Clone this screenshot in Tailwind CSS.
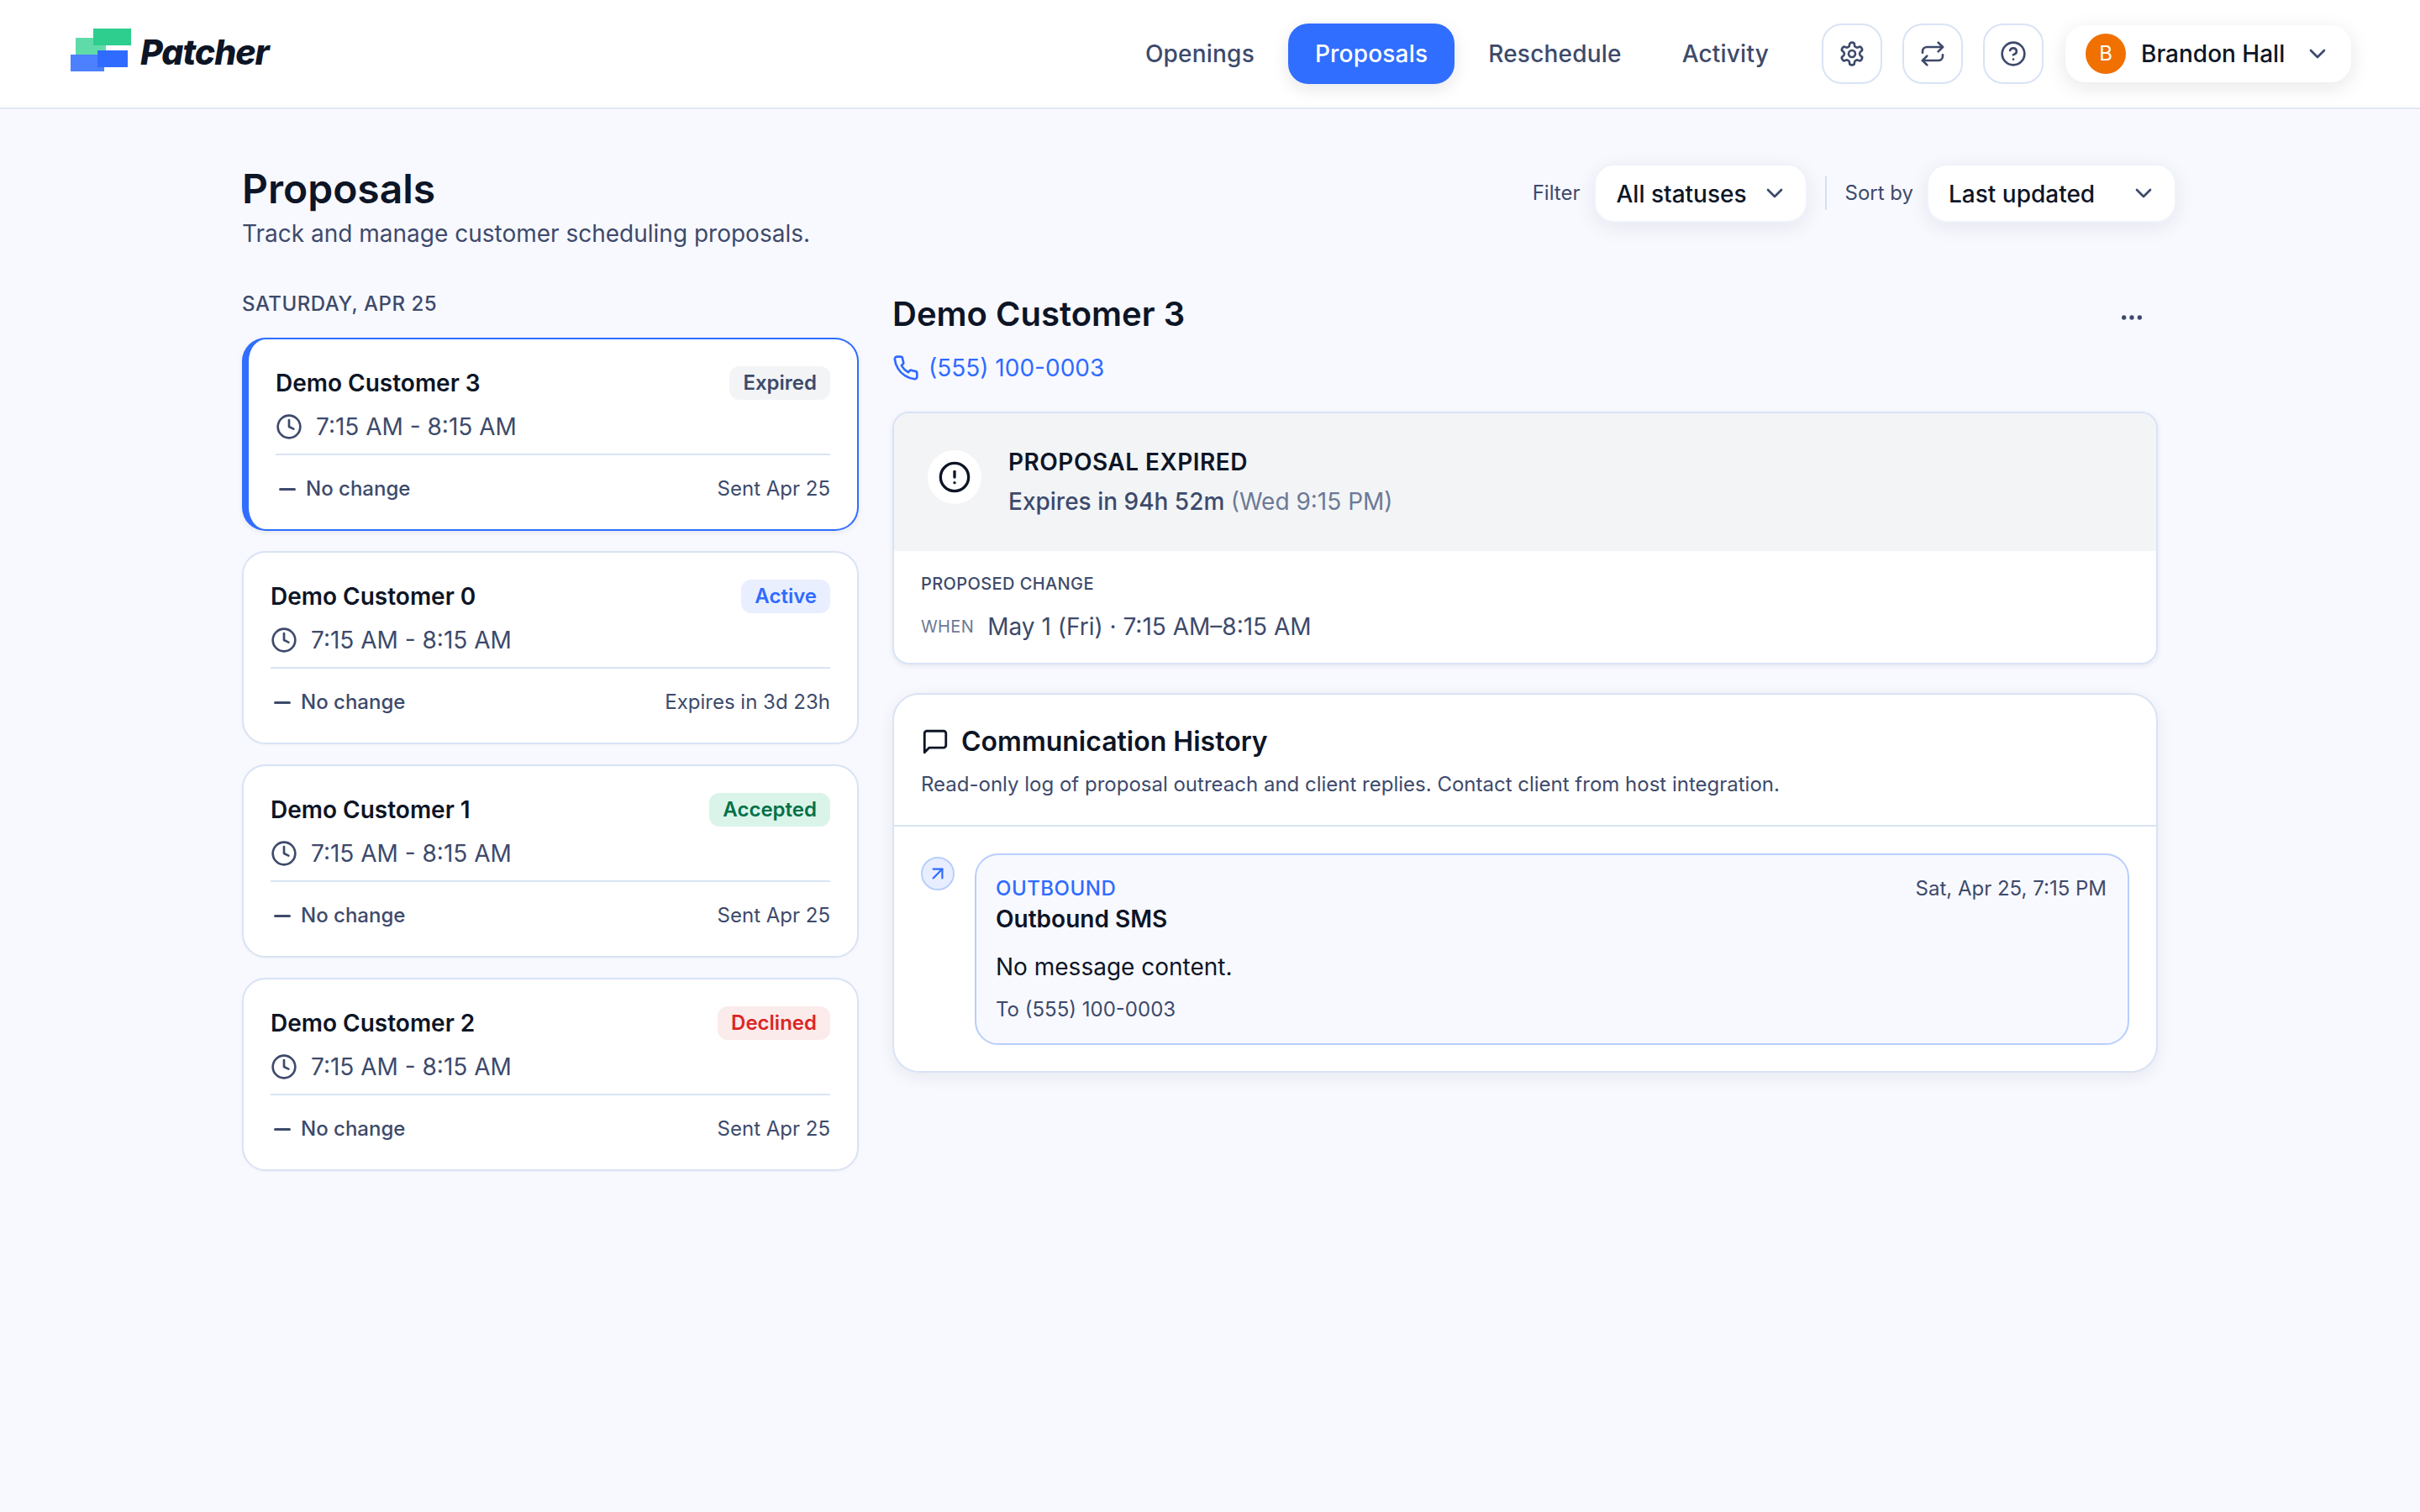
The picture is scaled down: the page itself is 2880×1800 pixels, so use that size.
<!DOCTYPE html>
<html>
<head>
<meta charset="utf-8">
<title>Patcher - Proposals</title>
<script src="https://cdn.jsdelivr.net/npm/@tailwindcss/browser@4"></script>
</head>
<body class="bg-[#f8f9ff] font-['Inter',sans-serif] text-[#0d1526] min-h-[1800px] antialiased">

<!-- top bar -->
<header class="h-[130px] bg-white border-b-2 border-[#e0e7f6] pl-[84px] pr-[82px] flex items-center justify-between">
  <div class="flex items-center gap-[11px]">
    <svg class="w-[72px] h-[51px] mb-[9px]" viewBox="0 0 72 51">
      <rect x="6" y="11" width="36" height="20" fill="#5fdbaa"/>
      <rect x="27" y="0" width="45" height="20" fill="#2dce8e"/>
      <rect x="0" y="31" width="40" height="20" fill="#4d80ff"/>
      <rect x="32" y="26" width="36" height="20" fill="#2f6bff"/>
    </svg>
    <span class="text-[41px] font-extrabold italic tracking-[-1px] leading-[50px] mb-[4px]">Patcher</span>
  </div>
  <div class="flex items-center">
    <nav class="flex items-center gap-[8px] text-[28px] font-medium tracking-[0.2px] text-[#3d4a6b]">
      <a class="h-[72px] px-[32px] flex items-center rounded-[24px]">Openings</a>
      <a class="h-[72px] px-[32px] flex items-center rounded-[24px] bg-[#306eff] text-white shadow-[0_6px_20px_rgba(15,23,42,0.10)]">Proposals</a>
      <a class="h-[72px] px-[32px] flex items-center rounded-[24px]">Reschedule</a>
      <a class="h-[72px] px-[32px] flex items-center rounded-[24px]">Activity</a>
    </nav>
    <div class="flex items-center gap-[24px] ml-[31px] text-[#3d4a6b]">
      <button class="w-[72px] h-[72px] rounded-[24px] border-2 border-[#d9e3f5] flex items-center justify-center">
        <svg class="w-[32px] h-[32px]" viewBox="0 0 24 24" fill="none" stroke="currentColor" stroke-width="2" stroke-linecap="round" stroke-linejoin="round"><path d="M12.22 2h-.44a2 2 0 0 0-2 2v.18a2 2 0 0 1-1 1.73l-.43.25a2 2 0 0 1-2 0l-.15-.08a2 2 0 0 0-2.73.73l-.22.38a2 2 0 0 0 .73 2.73l.15.1a2 2 0 0 1 1 1.72v.51a2 2 0 0 1-1 1.74l-.15.09a2 2 0 0 0-.73 2.73l.22.38a2 2 0 0 0 2.73.73l.15-.08a2 2 0 0 1 2 0l.43.25a2 2 0 0 1 1 1.73V20a2 2 0 0 0 2 2h.44a2 2 0 0 0 2-2v-.18a2 2 0 0 1 1-1.73l.43-.25a2 2 0 0 1 2 0l.15.08a2 2 0 0 0 2.73-.73l.22-.39a2 2 0 0 0-.73-2.73l-.15-.08a2 2 0 0 1-1-1.74v-.5a2 2 0 0 1 1-1.74l.15-.09a2 2 0 0 0 .73-2.73l-.22-.38a2 2 0 0 0-2.73-.73l-.15.08a2 2 0 0 1-2 0l-.43-.25a2 2 0 0 1-1-1.73V4a2 2 0 0 0-2-2z"/><circle cx="12" cy="12" r="3"/></svg>
      </button>
      <button class="w-[72px] h-[72px] rounded-[24px] border-2 border-[#d9e3f5] flex items-center justify-center">
        <svg class="w-[32px] h-[32px]" viewBox="0 0 24 24" fill="none" stroke="currentColor" stroke-width="2" stroke-linecap="round" stroke-linejoin="round"><path d="m17 2 4 4-4 4"/><path d="M3 11v-1a4 4 0 0 1 4-4h14"/><path d="m7 22-4-4 4-4"/><path d="M21 13v1a4 4 0 0 1-4 4H3"/></svg>
      </button>
      <button class="w-[72px] h-[72px] rounded-[24px] border-2 border-[#d9e3f5] flex items-center justify-center">
        <svg class="w-[32px] h-[32px]" viewBox="0 0 24 24" fill="none" stroke="currentColor" stroke-width="2" stroke-linecap="round" stroke-linejoin="round"><circle cx="12" cy="12" r="10"/><path d="M9.09 9a3 3 0 0 1 5.83 1c0 2-3 3-3 3"/><path d="M12 17h.01"/></svg>
      </button>
    </div>
    <div class="ml-[26px] w-[340px] h-[68px] rounded-[24px] bg-white shadow-[0_6px_24px_rgba(15,23,42,0.10)] pl-[24px] pr-[24px] flex items-center">
      <span class="w-[48px] h-[48px] rounded-full bg-[#f07000] text-white text-[24px] flex items-center justify-center">B</span>
      <span class="ml-[18px] flex-1 text-[28px] font-medium">Brandon Hall</span>
      <svg class="w-[32px] h-[32px] text-[#3d4a6b]" viewBox="0 0 24 24" fill="none" stroke="currentColor" stroke-width="2" stroke-linecap="round" stroke-linejoin="round"><path d="m6 9 6 6 6-6"/></svg>
    </div>
  </div>
</header>

<main class="w-[2304px] mx-auto pt-[64px]">
  <div class="flex items-start justify-between h-[152px]">
    <div>
      <h1 class="mt-[1px] text-[48px] leading-[60px] font-semibold">Proposals</h1>
      <p class="mt-[1px] text-[28px] leading-[44px] text-[#3d4a6b]">Track and manage customer scheduling proposals.</p>
    </div>
    <div class="flex items-center mt-[1px] mr-[2px]">
      <span class="text-[24px] text-[#3d4a6b]">Filter</span>
      <div class="ml-[17px] w-[254px] h-[70px] rounded-[24px] bg-white border-2 border-[#f0f3fb] shadow-[0_6px_24px_rgba(15,23,42,0.08)] pl-[24px] flex items-center justify-between pr-[21px]">
        <span class="text-[28px] font-medium mt-[2px]">All statuses</span>
        <svg class="w-[32px] h-[32px] text-[#3d4a6b]" viewBox="0 0 24 24" fill="none" stroke="currentColor" stroke-width="2" stroke-linecap="round" stroke-linejoin="round"><path d="m6 9 6 6 6-6"/></svg>
      </div>
      <span class="ml-[21px] w-[2px] h-[40px] bg-[#d3dff3]"></span>
      <span class="ml-[21px] text-[24px] text-[#3d4a6b]">Sort by</span>
      <div class="ml-[16px] w-[297px] h-[70px] rounded-[24px] bg-white border-2 border-[#f0f3fb] shadow-[0_6px_24px_rgba(15,23,42,0.08)] pl-[24px] flex items-center justify-between pr-[21px]">
        <span class="text-[28px] font-medium mt-[2px]">Last updated</span>
        <svg class="w-[32px] h-[32px] text-[#3d4a6b]" viewBox="0 0 24 24" fill="none" stroke="currentColor" stroke-width="2" stroke-linecap="round" stroke-linejoin="round"><path d="m6 9 6 6 6-6"/></svg>
      </div>
    </div>
  </div>

  <div class="flex items-start gap-[40px]">
    <!-- proposal list -->
    <section class="w-[734px] shrink-0">
      <h2 class="h-[32px] leading-[32px] text-[24px] font-medium text-[#3d4a6b] tracking-[0.5px]">SATURDAY, APR 25</h2>
      <div class="mt-[24px] flex flex-col gap-[24px]">

        <article class="h-[230px] rounded-[28px] bg-white border-2 border-l-8 border-[#306eff] shadow-[0_2px_6px_rgba(15,23,42,0.08)] pt-[32px] pl-[32px] pr-[32px]">
          <div class="flex items-center justify-between h-[40px]">
            <span class="text-[28px] font-semibold">Demo Customer 3</span>
            <span class="h-[40px] px-[16px] rounded-[12px] bg-[#f3f4f6] text-[24px] font-semibold text-[#3d4a6b] flex items-center">Expired</span>
          </div>
          <div class="mt-[10px] h-[44px] flex items-center gap-[16px] text-[28px] text-[#3d4a6b]">
            <svg class="w-[32px] h-[32px]" viewBox="0 0 24 24" fill="none" stroke="currentColor" stroke-width="2" stroke-linecap="round" stroke-linejoin="round"><circle cx="12" cy="12" r="10"/><polyline points="12 6 12 12 16 14"/></svg>
            7:15 AM - 8:15 AM
          </div>
          <div class="mt-[10px] border-t-2 border-[#d9e3f5] pt-[22px] h-[60px] flex items-center justify-between text-[24px] text-[#3d4a6b]">
            <span class="flex items-center"><span class="ml-[4px] w-[20px] h-[3px] bg-[#3d4a6b] rounded-full"></span><span class="ml-[12px] font-medium">No change</span></span>
            <span>Sent Apr 25</span>
          </div>
        </article>

        <article class="h-[230px] rounded-[28px] bg-white border-2 border-[#d9e3f5] shadow-[0_1px_3px_rgba(15,23,42,0.04)] pt-[32px] px-[32px]">
          <div class="flex items-center justify-between h-[40px]">
            <span class="text-[28px] font-semibold">Demo Customer 0</span>
            <span class="h-[40px] px-[16px] rounded-[12px] bg-[#e9efff] text-[24px] font-semibold text-[#2f6bff] flex items-center">Active</span>
          </div>
          <div class="mt-[10px] h-[44px] flex items-center gap-[16px] text-[28px] text-[#3d4a6b]">
            <svg class="w-[32px] h-[32px]" viewBox="0 0 24 24" fill="none" stroke="currentColor" stroke-width="2" stroke-linecap="round" stroke-linejoin="round"><circle cx="12" cy="12" r="10"/><polyline points="12 6 12 12 16 14"/></svg>
            7:15 AM - 8:15 AM
          </div>
          <div class="mt-[10px] border-t-2 border-[#d9e3f5] pt-[22px] h-[60px] flex items-center justify-between text-[24px] text-[#3d4a6b]">
            <span class="flex items-center"><span class="ml-[4px] w-[20px] h-[3px] bg-[#3d4a6b] rounded-full"></span><span class="ml-[12px] font-medium">No change</span></span>
            <span>Expires in 3d 23h</span>
          </div>
        </article>

        <article class="h-[230px] rounded-[28px] bg-white border-2 border-[#d9e3f5] shadow-[0_1px_3px_rgba(15,23,42,0.04)] pt-[32px] px-[32px]">
          <div class="flex items-center justify-between h-[40px]">
            <span class="text-[28px] font-semibold">Demo Customer 1</span>
            <span class="h-[40px] px-[16px] rounded-[12px] bg-[#daf4e9] text-[24px] font-semibold text-[#047048] flex items-center">Accepted</span>
          </div>
          <div class="mt-[10px] h-[44px] flex items-center gap-[16px] text-[28px] text-[#3d4a6b]">
            <svg class="w-[32px] h-[32px]" viewBox="0 0 24 24" fill="none" stroke="currentColor" stroke-width="2" stroke-linecap="round" stroke-linejoin="round"><circle cx="12" cy="12" r="10"/><polyline points="12 6 12 12 16 14"/></svg>
            7:15 AM - 8:15 AM
          </div>
          <div class="mt-[10px] border-t-2 border-[#d9e3f5] pt-[22px] h-[60px] flex items-center justify-between text-[24px] text-[#3d4a6b]">
            <span class="flex items-center"><span class="ml-[4px] w-[20px] h-[3px] bg-[#3d4a6b] rounded-full"></span><span class="ml-[12px] font-medium">No change</span></span>
            <span>Sent Apr 25</span>
          </div>
        </article>

        <article class="h-[230px] rounded-[28px] bg-white border-2 border-[#d9e3f5] shadow-[0_1px_3px_rgba(15,23,42,0.04)] pt-[32px] px-[32px]">
          <div class="flex items-center justify-between h-[40px]">
            <span class="text-[28px] font-semibold">Demo Customer 2</span>
            <span class="h-[40px] px-[16px] rounded-[12px] bg-[#fcebeb] text-[24px] font-semibold text-[#dc2626] flex items-center">Declined</span>
          </div>
          <div class="mt-[10px] h-[44px] flex items-center gap-[16px] text-[28px] text-[#3d4a6b]">
            <svg class="w-[32px] h-[32px]" viewBox="0 0 24 24" fill="none" stroke="currentColor" stroke-width="2" stroke-linecap="round" stroke-linejoin="round"><circle cx="12" cy="12" r="10"/><polyline points="12 6 12 12 16 14"/></svg>
            7:15 AM - 8:15 AM
          </div>
          <div class="mt-[10px] border-t-2 border-[#d9e3f5] pt-[22px] h-[60px] flex items-center justify-between text-[24px] text-[#3d4a6b]">
            <span class="flex items-center"><span class="ml-[4px] w-[20px] h-[3px] bg-[#3d4a6b] rounded-full"></span><span class="ml-[12px] font-medium">No change</span></span>
            <span>Sent Apr 25</span>
          </div>
        </article>
      </div>
    </section>

    <!-- detail -->
    <section class="w-[1506px]">
      <div class="flex items-center justify-between h-[56px]">
        <h2 class="text-[40px] font-semibold">Demo Customer 3</h2>
        <svg class="w-[32px] h-[32px] text-[#3d4a6b] mr-[15px] mt-[8px]" viewBox="0 0 24 24" fill="currentColor" stroke="currentColor" stroke-width="2" stroke-linecap="round" stroke-linejoin="round"><circle cx="12" cy="12" r="1"/><circle cx="19" cy="12" r="1"/><circle cx="5" cy="12" r="1"/></svg>
      </div>
      <div class="mt-[14px] h-[44px] flex items-center gap-[11px] text-[28px] text-[#2f6bff]">
        <svg class="w-[32px] h-[32px]" viewBox="0 0 24 24" fill="none" stroke="currentColor" stroke-width="2" stroke-linecap="round" stroke-linejoin="round"><path d="M22 16.92v3a2 2 0 0 1-2.18 2 19.79 19.79 0 0 1-8.63-3.07 19.5 19.5 0 0 1-6-6 19.79 19.79 0 0 1-3.07-8.67A2 2 0 0 1 4.11 2h3a2 2 0 0 1 2 1.72 12.84 12.84 0 0 0 .7 2.81 2 2 0 0 1-.45 2.11L8.09 9.91a16 16 0 0 0 6 6l1.27-1.27a2 2 0 0 1 2.11-.45 12.84 12.84 0 0 0 2.81.7A2 2 0 0 1 22 16.92z"/></svg>
        (555) 100-0003
      </div>

      <div class="mt-[30px] h-[301px] rounded-[20px] border-2 border-[#d9e3f5] bg-white shadow-[0_2px_6px_rgba(15,23,42,0.08)] overflow-hidden">
        <div class="h-[164px] bg-[#f3f4f6] pt-[40px] pl-[40px] flex items-start gap-[32px]">
          <span class="mt-[4px] w-[64px] h-[64px] rounded-full bg-white flex items-center justify-center">
            <svg class="w-[40px] h-[40px]" viewBox="0 0 24 24" fill="none" stroke="currentColor" stroke-width="2" stroke-linecap="round" stroke-linejoin="round"><circle cx="12" cy="12" r="10"/><line x1="12" y1="8" x2="12" y2="12"/><line x1="12" y1="16" x2="12.01" y2="16"/></svg>
          </span>
          <div>
            <div class="h-[36px] leading-[36px] text-[28px] font-semibold tracking-[0.5px]">PROPOSAL EXPIRED</div>
            <div class="mt-[7px] h-[44px] leading-[44px] text-[28px] font-medium text-[#3d4a6b]">Expires in 94h 52m <span class="font-normal text-[#6b7a95]">(Wed 9:15 PM)</span></div>
          </div>
        </div>
        <div class="pt-[25px] px-[32px]">
          <div class="h-[28px] leading-[28px] text-[20px] font-medium text-[#3d4a6b] tracking-[0.4px]">PROPOSED CHANGE</div>
          <div class="mt-[15px] h-[44px] flex items-center gap-[16px]">
            <span class="text-[20px] text-[#6b7a95] tracking-[0.4px]">WHEN</span>
            <span class="text-[28px] text-[#3d4a6b]">May 1 (Fri) · 7:15 AM–8:15 AM</span>
          </div>
        </div>
      </div>

      <div class="mt-[34px] h-[452px] rounded-[32px] border-2 border-[#d9e3f5] bg-white shadow-[0_6px_20px_rgba(15,23,42,0.07)]">
        <div class="h-[157px] border-b-2 border-[#d9e3f5] pt-[34px] pl-[32px]">
          <div class="h-[44px] flex items-center gap-[14px]">
            <svg class="w-[34px] h-[34px]" viewBox="0 0 24 24" fill="none" stroke="currentColor" stroke-width="2" stroke-linecap="round" stroke-linejoin="round"><path d="M21 15a2 2 0 0 1-2 2H7l-4 4V5a2 2 0 0 1 2-2h14a2 2 0 0 1 2 2z"/></svg>
            <h3 class="text-[32px] font-semibold">Communication History</h3>
          </div>
          <p class="mt-[11px] h-[36px] leading-[36px] text-[24px] text-[#3d4a6b]">Read-only log of proposal outreach and client replies. Contact client from host integration.</p>
        </div>
        <div class="pt-[32px] pl-[32px] pr-[32px] flex items-start gap-[24px]">
          <span class="mt-[4px] w-[40px] h-[40px] shrink-0 rounded-full bg-[#e8eeff] border-2 border-[#b8cffc] flex items-center justify-center text-[#2f6bff]">
            <svg class="w-[26px] h-[26px]" viewBox="0 0 24 24" fill="none" stroke="currentColor" stroke-width="2" stroke-linecap="round" stroke-linejoin="round"><path d="M7 7h10v10"/><path d="M7 17 17 7"/></svg>
          </span>
          <div class="flex-1 h-[228px] rounded-[28px] border-2 border-[#b8cffc] bg-[#f8f9ff] pt-[24px] pl-[23px] pr-[25px]">
            <div class="h-[32px] flex items-center justify-between">
              <span class="text-[24px] font-medium text-[#2f6bff] tracking-[0.5px]">OUTBOUND</span>
              <span class="text-[24px] text-[#3d4a6b]">Sat, Apr 25, 7:15 PM</span>
            </div>
            <div class="h-[40px] leading-[40px] text-[28px] font-semibold">Outbound SMS</div>
            <div class="mt-[15px] h-[44px] leading-[44px] text-[28px]">No message content.</div>
            <div class="mt-[11px] h-[36px] leading-[36px] text-[24px] text-[#3d4a6b]">To (555) 100-0003</div>
          </div>
        </div>
      </div>
    </section>
  </div>
</main>
</body>
</html>
